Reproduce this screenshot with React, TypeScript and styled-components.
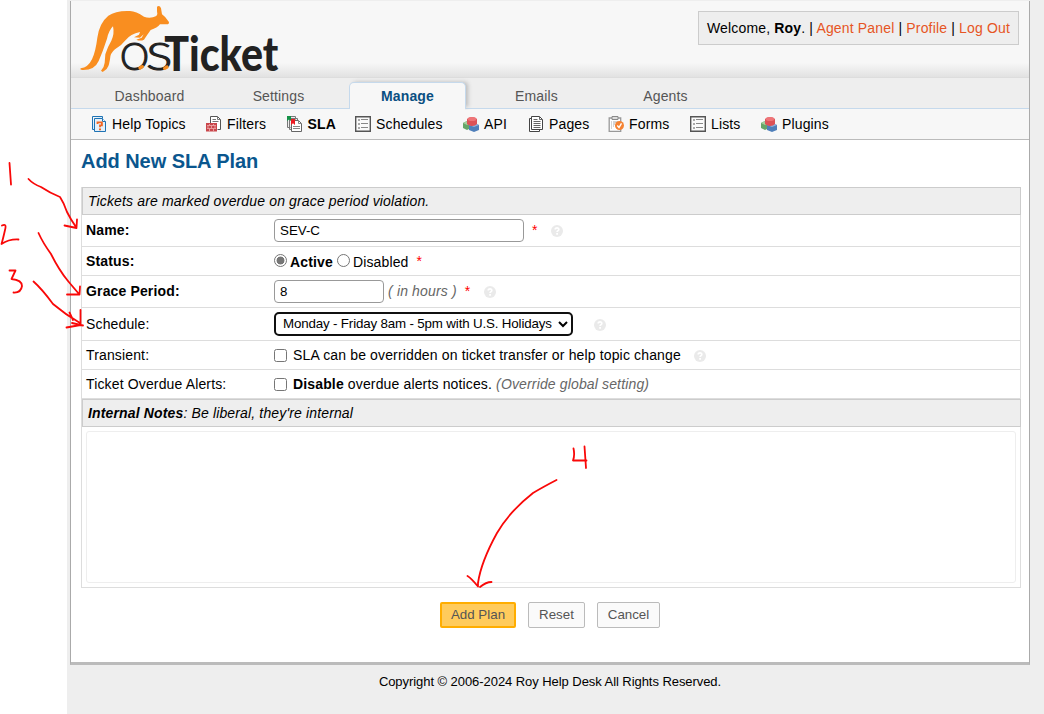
import React from "react";
import styled, { createGlobalStyle, css } from "styled-components";

const GlobalStyle = createGlobalStyle`
  * { box-sizing: border-box; }
  html, body { margin: 0; padding: 0; background: #fff; }
  body { font: 14px/16px "Liberation Sans", Arial, sans-serif; letter-spacing: 0.145px; color: #000; overflow: hidden; }
`;

const Page = styled.div`
  position: relative;
  width: 1044px;
  height: 714px;
  padding-left: 67px;
`;

const Desk = styled.div`
  height: 714px;
  background: #eee;
  padding: 1px 0 0 3px;
`;

const Container = styled.div`
  width: 960px;
  height: 664px;
  border: 1px solid #aaa;
  border-top: 0;
  border-bottom: 3px solid #bbb;
  background: #fff;
`;

const Header = styled.header`
  display: flex;
  justify-content: space-between;
  align-items: flex-start;
  height: 77px;
  border-bottom: 1px solid #ddd;
  background: linear-gradient(#f7f7f7 0, #f7f7f7 62px, #e2e2e2 76px);
`;

const LogoSvg = styled.svg`
  display: block;
  width: 210px;
  height: 75px;
  margin-left: 8px;
  overflow: visible;
  letter-spacing: 0;
`;

const Welcome = styled.div`
  height: 34px;
  margin: 10px 10px 0 0;
  padding: 0 8px;
  line-height: 32px;
  letter-spacing: 0.16px;
  border: 1px solid #ccc;
  background: #eee;
  white-space: nowrap;
`;

const HeadLink = styled.a`
  color: #e65524;
`;

const Tabs = styled.nav`
  display: flex;
  height: 31px;
  padding-left: 20px;
  background: #eee;
  border-bottom: 1px solid #c5d9ec;
`;

const Tab = styled.a<{ $active?: boolean }>`
  width: 117px;
  height: 27px;
  margin: 4px 12px 0 0;
  line-height: 29px;
  text-align: center;
  color: #555;
  ${(p) =>
    p.$active &&
    css`
      position: relative;
      color: #0a4f82;
      font-weight: bold;
      background: #f7f7f7;
      border: 1px solid #c5d9ec;
      border-bottom: 0;
      border-radius: 5px 5px 0 0;
      line-height: 27px;
      box-shadow: 3px -1px 4px -1px #bbb;
      clip-path: inset(-5px -8px -1px 0);
      &::after {
        content: "";
        position: absolute;
        left: 0;
        right: 0;
        bottom: -1px;
        height: 1px;
        background: #f7f7f7;
      }
    `}
`;

const SubNav = styled.nav`
  display: flex;
  height: 31px;
  padding-left: 20px;
  background: #f7f7f7;
  border-bottom: 1px solid #bbb;
`;

const SubItem = styled.a<{ $w: number; $active?: boolean }>`
  display: flex;
  align-items: center;
  gap: 5px;
  width: ${(p) => p.$w}px;
  flex: none;
  white-space: nowrap;
  font-weight: ${(p) => (p.$active ? "bold" : "normal")};
  svg { flex: none; }
`;

const Content = styled.main`
  padding: 8px 8px 0 10px;
`;

const Title = styled.h2`
  margin: 0;
  height: 39px;
  font-size: 20px;
  line-height: 26px;
  letter-spacing: -0.06px;
  color: #0a568e;
`;

const FormTable = styled.section`
  width: 940px;
  border: 1px solid #ddd;
  border-top: 0;
`;

const Band = styled.div`
  height: 28px;
  margin: 0 -1px 0 0;
  padding-left: 5px;
  border: 1px solid #ccc;
  background: #eee;
  font-style: italic;
  line-height: 27px;
`;

const Row = styled.div<{ $h: number; $raise?: boolean }>`
  display: flex;
  align-items: center;
  height: ${(p) => p.$h}px;
  padding: 0 4px ${(p) => (p.$raise ? 2 : 0)}px;
  border-bottom: 1px solid #ddd;
`;

const Label = styled.label<{ $required?: boolean }>`
  width: 188px;
  flex: none;
  font-weight: ${(p) => (p.$required ? "bold" : "normal")};
`;

const TextInput = styled.input<{ $w: number }>`
  width: ${(p) => p.$w}px;
  height: 23px;
  margin: 2px 0 0;
  padding: 0 5px 1px;
  border: 1px solid #999;
  border-radius: 4px;
  background: #fff;
  color: #000;
  font: 13.33px "Liberation Sans", Arial, sans-serif;
`;

const ScheduleSelect = styled.select`
  width: 299px;
  height: 24px;
  padding: 0 0 1px 3px;
  border: 2px solid #101010;
  border-radius: 5px;
  background: #fff;
  color: #000;
  font: 13.33px "Liberation Sans", Arial, sans-serif;
  letter-spacing: -0.155px;
  outline: 0;
`;

const Radio = styled.input`
  appearance: none;
  width: 13px;
  height: 13px;
  margin: 0 3px 2px 0;
  border: 1px solid #767676;
  border-radius: 50%;
  background: #fff;
  &:checked { background: radial-gradient(circle, #767676 0 3.6px, #fff 4.3px); }
`;

const RadioText = styled.span<{ $bold?: boolean }>`
  margin-right: ${(p) => (p.$bold ? 4 : 0)}px;
  padding-top: 1px;
  font-weight: ${(p) => (p.$bold ? "bold" : "normal")};
`;

const Check = styled.input`
  appearance: none;
  width: 13px;
  height: 13px;
  margin: 0 6px 0 0;
  border: 1px solid #767676;
  border-radius: 2.5px;
  background: #fff;
`;

const Star = styled.span<{ $l: number }>`
  margin-left: ${(p) => p.$l}px;
  width: 6px;
  color: #f00;
`;

const Hint = styled.em`
  color: #666;
  white-space: pre;
`;

const HelpSvg = styled.svg<{ $l: number }>`
  width: 12px;
  height: 12px;
  margin: 2px 0 0 ${(p) => p.$l}px;
  flex: none;
`;

const NotesCell = styled.div`
  height: 160px;
  padding: 4px 4px 0;
`;

const Notes = styled.textarea`
  display: block;
  width: 930px;
  height: 152px;
  resize: none;
  border: 1px solid #eee;
  border-radius: 3px;
  background: #fff;
  outline: 0;
`;

const Actions = styled.div`
  display: flex;
  justify-content: center;
  gap: 12px;
  margin: 14px 0 0 -2px;
`;

const Button = styled.button<{ $w: number; $primary?: boolean }>`
  width: ${(p) => p.$w}px;
  height: 26px;
  padding: 0 0 1px;
  border: ${(p) => (p.$primary ? "2px solid #ffad00" : "1px solid #bbb")};
  border-radius: 2px;
  background: ${(p) => (p.$primary ? "#ffcb5c" : "#fafafa")};
  color: #555;
  font: 13.33px "Liberation Sans", Arial, sans-serif;
`;

const Footer = styled.footer`
  width: 960px;
  padding-top: 9px;
  text-align: center;
  font-size: 13px;
  letter-spacing: -0.06px;
`;

const Ink = styled.svg`
  position: absolute;
  inset: 0;
  pointer-events: none;
`;

const Logo = () => (
  <LogoSvg viewBox="57 3 630 225">
    <path
      fill="#f98e20"
      d="M291 20Q299 14 303 25L306 43Q318 52 324 62Q330 68 324 73L300 73Q292 84 272 90Q262 104 252 119Q241 124 229 119L245 113L251 103L240 113L222 112L237 104L240 96Q212 101 195 122Q184 137 165 148Q150 160 150 178L147 193Q144 207 128 216L123 212Q133 201 134 188L136 163Q143 140 154 122Q164 102 159 79Q147 90 141 116Q129 153 116 183Q104 211 67 210Q59 210 62 205Q84 203 96 178Q107 154 112 113Q118 69 145 47Q168 31 210 33Q228 34 252 50Q271 57 289 48Q294 43 291 34Z"
    />
    <g fontFamily="Lato, sans-serif" fill="#222">
      <g fontSize="114" fontWeight="300" stroke="#222" strokeWidth="3.5">
        <text x="180" y="211" textLength="87" lengthAdjust="spacingAndGlyphs">O</text>
        <text x="259" y="211" textLength="78" lengthAdjust="spacingAndGlyphs">S</text>
      </g>
      <text x="313" y="213" fontSize="145" fontWeight="900" textLength="342" lengthAdjust="spacingAndGlyphs">Ticket</text>
    </g>
    <path stroke="#f98e20" strokeWidth="10" strokeLinecap="round" d="M240 204l7-4M314 205l7-4" />
  </LogoSvg>
);

const HelpIcon = ({ l }: { l: number }) => (
  <HelpSvg $l={l} viewBox="0 0 12 12">
    <circle cx="6" cy="6" r="6" fill="#eaeaea" />
    <path d="M4.2 4.6C4.2 2.2 8 2.4 7.8 4.5C7.7 5.7 6.1 5.5 6.1 7.1" fill="none" stroke="#fff" strokeWidth="1.7" />
    <path d="M5.2 8h1.8v1.7H5.2z" fill="#fff" />
  </HelpSvg>
);

const icons: Record<string, React.ReactNode> = {
  help: (
    <>
      <path d="M1.5.5h10v2M1.5.5v13h2" fill="#d9ecfa" stroke="#1e73b4" />
      <path d="M3.5 2.5h8l3 3v10h-11z" fill="#e4f0fa" stroke="#1e73b4" />
      <path d="M11.5 2.5v3h3" fill="#fff" stroke="#1e73b4" />
      <path d="M6.5 8V6.4h4.4v3H9v1.8M8 13.3h2" fill="none" stroke="#f26522" strokeWidth="1.8" />
    </>
  ),
  filter: (
    <>
      <path d="M4.500 8V.5h7l3 3v10h-3" fill="#fff" stroke="#555" />
      <path d="M11.500.5v3h3M6.500 3.500h3.500M6.500 5.500h6" fill="none" stroke="#777" />
      <path d="M0 7h11v8.500H0z" fill="#c9464b" />
      <path d="M1 9.500h9M1 12.500h9M3.500 8v1M7.500 8v1M5.500 10v2M9 10v2M2 10v2M3.500 13v2M7.500 13v2" stroke="#f0b0b0" strokeWidth=".8" />
    </>
  ),
  sla: (
    <>
      <path d="M.5.5h8v3M.5.5v11h3M2.5 2.5h8v3M2.5 2.5v11h2" fill="#eee" stroke="#777" />
      <path d="M4.5 4.5h7l3 3v8h-10z" fill="#fff" stroke="#666" />
      <path d="M6 10.5h7M6 12.5h7M11.5 4.5v3h3" fill="none" stroke="#888" />
      <path d="M0 0h4v5L2 3.500 0 5z" fill="#149147" />
      <path d="M4 3h4v6L6 7.300 4 9z" fill="#ed1c24" />
    </>
  ),
  list: (
    <>
      <path d="M.7.7h14.600v14.600H.7z" fill="#fafafa" stroke="#555" strokeWidth="1.4" />
      <path d="M3 3h2v2H3zM3 7h2v2H3zM3 11h2v2H3z" fill="#aaa" />
      <path d="M6 3.500h7M6 7.500h7M6 11.500h7" stroke="#888" />
    </>
  ),
  api: (
    <>
      <path d="M0 7l4-2 4 2v5l-4 2-4-2z" fill="#65a568" />
      <path d="M0 7l4 2 4-2-4-2z" fill="#a4cf9c" />
      <path d="M6 9l5-2 5 2v5l-5 2-5-2z" fill="#4f7fba" />
      <path d="M6 9l5 2 5-2-5-2z" fill="#8fb3df" />
      <path d="M4 3Q9-1 14 3v5q-2 2.500-6 2-3-1-4-2z" fill="#dc5257" />
      <ellipse cx="9" cy="3" rx="4.400" ry="2" fill="#ee7578" />
    </>
  ),
  pages: (
    <>
      <path d="M4 2.500H1.500v13h10V14" fill="#fff" stroke="#444" />
      <path d="M3.500.5h8l3 3v10h-11z" fill="#fff" stroke="#444" />
      <path d="M11.500.5v3h3M5.500 3.500h4M5.500 5.500h7M5.500 7.500h7M5.500 9.500h7M5.500 11.500h7" fill="none" stroke="#666" />
    </>
  ),
  forms: (
    <>
      <path d="M1.200 2h11.500v13.300H1.200z" fill="#fff" stroke="#999" strokeWidth="1.3" />
      <path d="M4 .5h6v3H4z" fill="#ddd" stroke="#888" />
      <path d="M3 6h1M3 8h1M3 10h1M3 12h1M5 6h5M5 8h2M5 10h1" stroke="#aaa" />
      <circle cx="11.500" cy="9.500" r="4.500" fill="#f58232" />
      <path d="M9.300 9.500l1.700 2 2.500-4.200" fill="none" stroke="#fff" strokeWidth="1.4" />
    </>
  ),
};

const Icon = ({ name }: { name: string }) => (
  <svg width="16" height="16" viewBox="0 0 16 16">{icons[name]}</svg>
);

const subItems = [
  { icon: "help", text: "Help Topics", w: 115 },
  { icon: "filter", text: "Filters", w: 80.5 },
  { icon: "sla", text: "SLA", w: 68.5, active: true },
  { icon: "list", text: "Schedules", w: 108 },
  { icon: "api", text: "API", w: 65 },
  { icon: "pages", text: "Pages", w: 80 },
  { icon: "forms", text: "Forms", w: 82 },
  { icon: "list", text: "Lists", w: 71 },
  { icon: "api", text: "Plugins", w: 80 },
];

export default function App() {
  return (
    <Page>
      <GlobalStyle />
      <Desk>
        <Container>
          <Header>
            <Logo />
            <Welcome>
              Welcome, <b>Roy</b>. | <HeadLink>Agent Panel</HeadLink> | <HeadLink>Profile</HeadLink> | <HeadLink>Log Out</HeadLink>
            </Welcome>
          </Header>
          <Tabs>
            {["Dashboard", "Settings", "Manage", "Emails", "Agents"].map((t) => (
              <Tab key={t} $active={t === "Manage"}>{t}</Tab>
            ))}
          </Tabs>
          <SubNav>
            {subItems.map((s) => (
              <SubItem key={s.text} $w={s.w} $active={s.active}>
                <Icon name={s.icon} />
                {s.text}
              </SubItem>
            ))}
          </SubNav>
          <Content>
            <Title>Add New SLA Plan</Title>
            <FormTable>
              <Band>Tickets are marked overdue on grace period violation.</Band>
              <Row $h={32} $raise>
                <Label $required>Name:</Label>
                <TextInput $w={250} defaultValue="SEV-C" />
                <Star $l={8}>*</Star>
                <HelpIcon l={13} />
              </Row>
              <Row $h={29}>
                <Label $required>Status:</Label>
                <Radio type="radio" name="status" defaultChecked />
                <RadioText $bold>Active</RadioText>
                <Radio type="radio" name="status" />
                <RadioText>Disabled</RadioText>
                <Star $l={8}>*</Star>
              </Row>
              <Row $h={32} $raise>
                <Label $required>Grace Period:</Label>
                <TextInput $w={110} defaultValue="8" />
                <Hint> ( in hours )</Hint>
                <Star $l={8}>*</Star>
                <HelpIcon l={13} />
              </Row>
              <Row $h={33}>
                <Label>Schedule:</Label>
                <ScheduleSelect>
                  <option>Monday - Friday 8am - 5pm with U.S. Holidays</option>
                </ScheduleSelect>
                <HelpIcon l={21} />
              </Row>
              <Row $h={29}>
                <Label>Transient:</Label>
                <Check type="checkbox" />
                <span>SLA can be overridden on ticket transfer or help topic change</span>
                <HelpIcon l={13} />
              </Row>
              <Row $h={29}>
                <Label>Ticket Overdue Alerts:</Label>
                <Check type="checkbox" />
                <span><b>Disable</b> overdue alerts notices. <Hint>(Override global setting)</Hint></span>
              </Row>
              <Band><b>Internal Notes</b>: Be liberal, they're internal</Band>
              <NotesCell><Notes /></NotesCell>
            </FormTable>
            <Actions>
              <Button $w={76} $primary>Add Plan</Button>
              <Button $w={57}>Reset</Button>
              <Button $w={63}>Cancel</Button>
            </Actions>
          </Content>
        </Container>
        <Footer>Copyright © 2006-2024 Roy Help Desk All Rights Reserved.</Footer>
      </Desk>
      <Ink width="1044" height="714" fill="none" stroke="#f90808" strokeWidth="1.8" strokeLinecap="round" strokeLinejoin="round">
        <path d="M9.5 163L11 184.500M28.500 179Q33 184 41 187Q50 193 60 197Q64 203 67 212Q71 220 76 227M77 219.500L76.500 227.500M64.500 225.500L76.500 228" />
        <path d="M2 225.500Q7 223 5 230Q3 239 1.500 244Q9 239 18.500 239.500M38.500 233Q43 243 51 254Q59 270 68 281L79 294M80 286.500L79.500 294.500L67 294.500" />
        <path d="M9.500 270.500L15.500 270.500L11.500 279Q22 280 22 286Q21 293 13.500 292.500M33.500 281.500Q42 289 53 304Q66 315 80 323M80.500 310L80.500 325L66.500 327.500M69.500 312.500L73 320M72 323L83 325.500" />
        <path d="M573.500 448.500Q575 455 573 460.500L586.500 460.500M584.500 446.500L586 468M556.500 480Q543 487 533 493Q509 512 497 533Q481 562 478 583L478 586M467.500 576Q471 578 478 586.500M480 587Q486 582 491.500 582" />
      </Ink>
    </Page>
  );
}
